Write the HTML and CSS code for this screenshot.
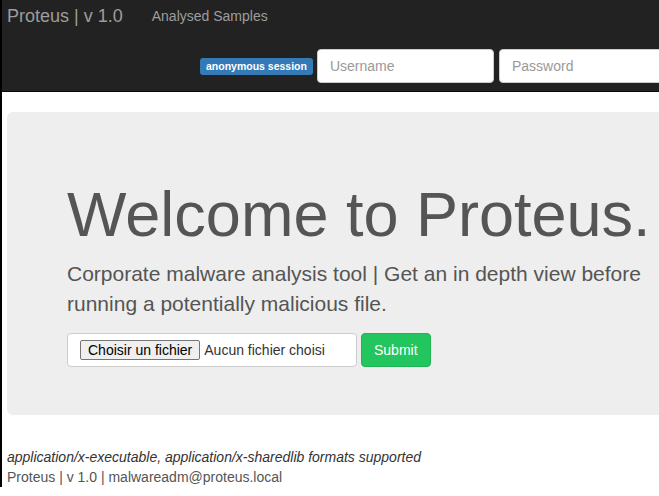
FILE: index.html
```html
<!DOCTYPE html>
<html lang="fr">
<head>
<meta charset="utf-8">
<title>Proteus | v 1.0</title>
<link rel="stylesheet" href="styles.css">
</head>
<body>
<nav class="navbar">
  <div class="nav-top">
    <a class="brand" href="#">Proteus | v 1.0</a>
    <a class="nav-link" href="#">Analysed Samples</a>
  </div>
  <form class="login">
    <span class="badge">anonymous session</span>
    <input class="field" type="text" placeholder="Username">
    <input class="field" type="password" placeholder="Password">
  </form>
</nav>
<main class="jumbotron">
  <h1 class="title">Welcome to Proteus.</h1>
  <p class="lead">Corporate malware analysis tool | Get an in depth view before running a potentially malicious file.</p>
  <form class="upload">
    <label class="file-field">
      <input class="file-native" type="file">
      <span class="file-btn">Choisir un fichier</span>
      <span class="file-name">Aucun fichier choisi</span>
    </label>
    <button class="submit" type="button">Submit</button>
  </form>
</main>
<footer class="footer">
  <p class="formats">application/x-executable, application/x-sharedlib formats supported</p>
  <p class="credits">Proteus | v 1.0 | malwareadm@proteus.local</p>
</footer>
</body>
</html>
```
FILE: styles.css
```css
html {
  background: #fff;
  border-left: 2px solid #000;
  overflow: hidden;
}
body {
  margin: 0;
  font-family: "Liberation Sans", Arial, sans-serif;
  font-size: 14px;
  line-height: 20px;
  color: #333;
  overflow: hidden;
}
.navbar {
  background: #222;
  border-bottom: 1px solid #080808;
  margin-bottom: 20px;
}
.nav-top {
  height: 41px;
  box-sizing: border-box;
  padding: 6px 0 0 5px;
  display: flex;
  align-items: flex-start;
  gap: 29px;
}
.brand {
  font-size: 18px;
  line-height: 20px;
  color: #9d9d9d;
  text-decoration: none;
}
.nav-link {
  font-size: 14px;
  line-height: 20px;
  color: #9d9d9d;
  text-decoration: none;
}
.login {
  margin: 0;
  height: 50px;
  box-sizing: border-box;
  padding: 8px 0 8px 198px;
  display: flex;
  align-items: center;
  white-space: nowrap;
}
.badge {
  flex: none;
  height: 17px;
  box-sizing: border-box;
  background: #337ab7;
  color: #fff;
  font-weight: bold;
  font-size: 10.5px;
  line-height: 11px;
  padding: 3px 6px;
  border-radius: 3px;
  margin-right: 4px;
}
.field {
  flex: none;
  width: 177px;
  height: 34px;
  box-sizing: border-box;
  padding: 6px 12px;
  border: 1px solid #ccc;
  border-radius: 4px;
  font-family: inherit;
  font-size: 14px;
  color: #555;
  background: #fff;
  margin-right: 5px;
}
.field::placeholder {
  color: #999;
}
.jumbotron {
  display: block;
  width: 740px;
  box-sizing: border-box;
  margin-left: 5px;
  padding: 48px 60px;
  background: #eee;
  border-radius: 6px;
  color: #555;
}
.title {
  margin: 20px 0 10px;
  font-size: 63px;
  line-height: 1.1;
  font-weight: 500;
  white-space: nowrap;
}
.lead {
  margin: 0 0 15px;
  font-size: 21px;
  line-height: 1.4;
  font-weight: 200;
}
.upload {
  margin: 0;
  display: flex;
  gap: 4px;
  align-items: flex-start;
}
.file-field {
  width: 290px;
  height: 34px;
  box-sizing: border-box;
  padding: 6px 12px;
  border: 1px solid #ccc;
  border-radius: 4px;
  background: #fff;
  display: flex;
  align-items: center;
  white-space: nowrap;
  overflow: hidden;
}
.file-native {
  display: none;
}
.file-btn {
  height: 20px;
  box-sizing: border-box;
  padding: 0 7px;
  border: 1px solid #767676;
  border-radius: 2px;
  background: #efefef;
  color: #000;
  font-size: 14px;
  line-height: 18px;
}
.file-name {
  margin-left: 4px;
  font-size: 14px;
  color: #333;
}
.submit {
  height: 34px;
  padding: 6px 12px;
  border: 1px solid #1fb456;
  border-radius: 4px;
  background: #22c55e;
  color: #fff;
  font-family: inherit;
  font-size: 14px;
  line-height: 20px;
}
.footer {
  margin-top: 32px;
  padding-left: 5px;
}
.footer p {
  margin: 0;
}
.formats {
  font-style: italic;
  color: #333;
}
.credits {
  color: #555;
}
```
